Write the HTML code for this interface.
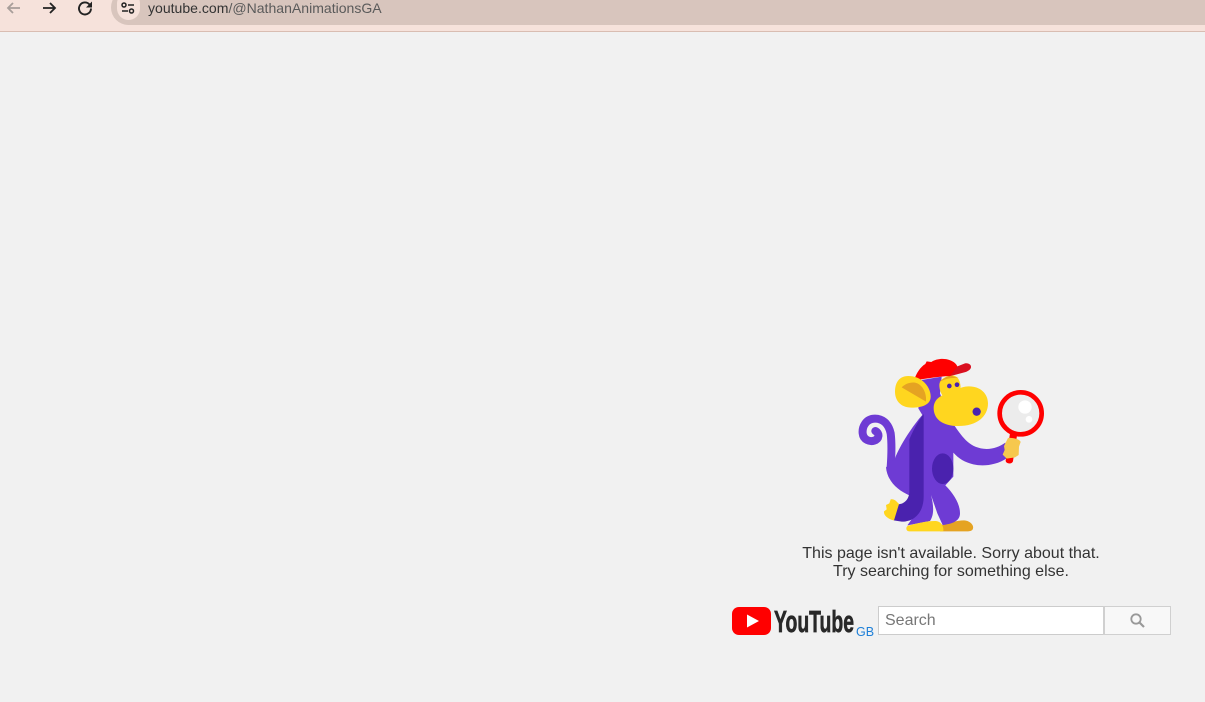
<!DOCTYPE html>
<html lang="en">
<head>
<meta charset="utf-8">
<title>YouTube</title>
<style>
html,body{margin:0;padding:0;width:1205px;height:702px;overflow:hidden;background:#f1f1f1;font-family:"Liberation Sans",sans-serif}
.abs{position:absolute}
#bar{left:0;top:0;width:1205px;height:31px;background:#f6e2db;border-bottom:1px solid #d9bdb2}
#omni{left:111px;top:-10px;width:1120px;height:35px;background:#d8c5bd;border-radius:18px}
#chip{left:117px;top:-8px;width:23px;height:28px;background:#f6e2db;border-radius:12px}
#url{left:148px;top:0;font-size:14.05px;line-height:17px;color:#333;white-space:nowrap}
#url span{color:#5a5a5a}
#msg{left:751px;top:544.5px;width:400px;text-align:center;font-size:16px;line-height:18px;color:#333}
#gb{left:856px;top:625px;font-size:12.5px;line-height:14px;color:#1f80d8}
#search{left:878px;top:606px;width:225px;height:27px;background:#fff;border:1px solid #ccc;border-right:none;font-size:16px;line-height:27px;color:#777;text-indent:6px}
#btn{left:1103px;top:606px;width:65px;height:27px;background:#f8f8f8;border:1px solid #d0d0d0;border-left:2px solid #d0d0d0;box-sizing:content-box}
</style>
</head>
<body>
<div id="bar" class="abs"></div>
<div id="omni" class="abs"></div>
<div id="chip" class="abs"></div>
<svg class="abs" style="left:0;top:0" width="140" height="30" viewBox="0 0 140 30" fill="none">
  <path d="M20 8H8M13 3L8 8l5 5" stroke="#a89e9a" stroke-width="1.800"/>
  <path d="M43 8h12M50 3l5 5-5 5" stroke="#222" stroke-width="1.800"/>
  <path d="M89.500 4.500A6 6 0 1 0 91 8.500" stroke="#222" stroke-width="1.900"/>
  <path d="M92 1.500v6h-6z" fill="#222"/>
  <circle cx="124" cy="5" r="2" stroke="#222" stroke-width="1.500"/>
  <path d="M128 5h6M122 11h6" stroke="#222" stroke-width="1.500"/>
  <circle cx="131.500" cy="11" r="2" stroke="#222" stroke-width="1.500"/>
</svg>
<div id="url" class="abs">youtube.com<span>/@NathanAnimationsGA</span></div>

<svg class="abs" style="left:850px;top:350px" width="200" height="190" viewBox="0 0 600 570">
  <!-- tail -->
  <path d="M122 352C125 310 125 275 122 250C115 218 95 206 75 206C47 206 36 232 38 250C40 270 60 276 72 272C88 267 90 250 76 243" fill="none" stroke="#6e3bd4" stroke-width="24" stroke-linecap="round"/>
  <!-- back foot -->
  <path d="M270 526C295 520 320 511 342 511C362 512 374 528 368 538C365 543 358 544 352 544H270z" fill="#e5a322"/>
  <!-- body, arm, legs -->
  <path d="M205 175L215 90L275 80L270 130L300 215L312 225C340 265 360 295 410 297C430 297 450 290 466 278L470 325C440 345 400 350 370 343C345 338 325 325 310 308V380L286 406C312 432 330 462 330 490C330 515 302 522 278 525L262 490L243 435C252 470 252 495 240 513L172 526L205 480L178 436C145 422 112 395 108 352L135 325C150 285 190 225 217 195z" fill="#6e3bd4"/>
  <!-- dark leg -->
  <path d="M178 268C190 240 205 212 221 192V440C221 490 190 516 155 515L131 511L145 463C165 462 178 445 178 425z" fill="#4a22ae"/>
  <!-- belly -->
  <ellipse cx="278" cy="356" rx="32" ry="46" fill="#4a22ae"/>
  <!-- back hand -->
  <path d="M132 511C118 509 100 498 102 484L110 478L108 465L118 460L122 448C132 446 138 452 147 462z" fill="#ffd61f"/>
  <!-- front foot -->
  <path d="M178 526C205 519 235 512 258 513C272 514 282 528 280 544H178C166 544 166 527 178 526z" fill="#ffd61f"/>
  <!-- forehead -->
  <path d="M268 105C268 90 285 78 305 76C322 76 330 88 332 112L300 145L280 140C272 130 268 118 268 105z" fill="#ffd61f"/>
  <path d="M268 96C280 84 292 80 300 76L326 84C305 82 285 86 268 96z" fill="#e5a322"/>
  <!-- muzzle -->
  <path d="M251 172C253 145 275 135 295 130C315 122 330 110 355 109C390 108 414 130 414 160C414 200 380 228 325 228C275 228 250 205 251 172z" fill="#ffd61f"/>
  <circle cx="380" cy="185" r="12.500" fill="#4a22ae"/>
  <circle cx="298" cy="108" r="7" fill="#4a22ae"/>
  <circle cx="321" cy="104" r="7" fill="#4a22ae"/>
  <!-- hat brim -->
  <path d="M296 79L320 50L345 40C356 38 364 44 363 52C361 60 352 65 340 68C325 72 310 76 296 79z" fill="#d90f1f"/>
  <!-- hat -->
  <path d="M192 92C198 70 212 50 226 42L230 34L244 36C258 26 282 24 298 30C312 35 320 42 322 50L300 78C260 80 225 86 192 92z" fill="#ff0000"/>
  <!-- ear -->
  <path d="M135 125C135 95 150 78 175 78C215 78 242 110 242 140C242 165 215 173 185 173C150 173 135 150 135 125z" fill="#ffd61f"/>
  <path d="M155 112C165 102 180 96 195 98C215 102 230 125 228 155z" fill="#e5a322"/>
  <!-- handle -->
  <path d="M480 250L467 332C467 342 487 344 489 333L502 250z" fill="#f00"/>
  <!-- lens -->
  <circle cx="512" cy="190" r="63" fill="#ececec" stroke="#ff0000" stroke-width="14"/>
  <circle cx="525" cy="171" r="20" fill="#fff"/>
  <circle cx="537" cy="208" r="10" fill="#fff"/>
  <!-- hand -->
  <path d="M474 264C490 262 510 268 512 276L507 290L506 315L495 322L470 326L458 314L464 300L462 288z" fill="#f6c84e"/>
</svg>

<div id="msg" class="abs">This page isn't available. Sorry about that.<br>Try searching for something else.</div>

<svg class="abs" style="left:730px;top:604px" width="126" height="34" viewBox="0 0 126 34">
  <rect x="2" y="3" width="39" height="28" rx="7" fill="#ff0000"/>
  <path d="M17 10.500L29 17 17 23.500z" fill="#fff"/>
  <text x="44" y="28" font-family="'Liberation Sans',sans-serif" font-weight="700" font-size="31" fill="#282828" stroke="#282828" stroke-width=".7" textLength="80" lengthAdjust="spacingAndGlyphs">YouTube</text>
</svg>
<div id="gb" class="abs">GB</div>
<div id="search" class="abs">Search</div>
<div id="btn" class="abs"></div>
<svg class="abs" style="left:1129px;top:612px" width="18" height="18" viewBox="0 0 18 18" fill="none">
  <circle cx="7" cy="7" r="4.700" stroke="#999" stroke-width="1.800"/>
  <path d="M10.500 10.500L15 15" stroke="#999" stroke-width="2.200"/>
</svg>
</body>
</html>
